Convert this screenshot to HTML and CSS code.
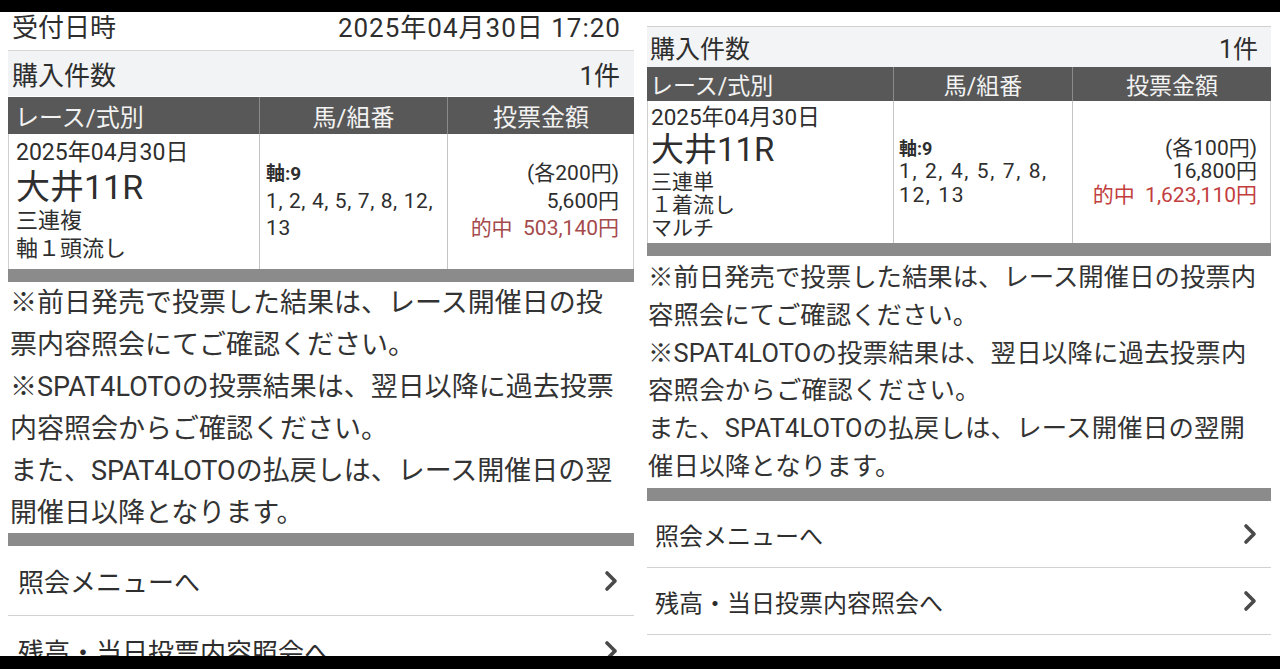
FILE: index.html
```html
<!DOCTYPE html>
<html lang="ja">
<head>
<meta charset="utf-8">
<title>投票内容</title>
<link rel="stylesheet" href="styles.css">
</head>
<body>
<div class="screen">
  <div class="bar-top"></div>
  <div class="panels">
    <section class="panel p-left">
      <div class="row-plain">
        <span>受付日時</span><span class="stamp">2025年04月30日 17:20</span>
      </div>
      <div class="row-count">
        <span>購入件数</span><span>1件</span>
      </div>
      <div class="tbl">
        <div class="th th1">レース/式別</div>
        <div class="th th2">馬/組番</div>
        <div class="th th3">投票金額</div>
        <div class="td td1">
          <div class="date">2025年04月30日</div>
          <div class="race">大井11R</div>
          <div class="kind">三連複</div>
          <div class="kind">軸１頭流し</div>
        </div>
        <div class="td td2">
          <div class="axis">軸:9</div>
          <div class="nums">1, 2, 4, 5, 7, 8, 12,</div>
          <div class="nums">13</div>
        </div>
        <div class="td td3">
          <div class="amt">(各200円)</div>
          <div class="amt">5,600円</div>
          <div class="amt hit">的中&nbsp;&nbsp;503,140円</div>
        </div>
      </div>
      <div class="gbar"></div>
      <div class="notes">
        <p>※前日発売で投票した結果は、レース開催日の投<br>票内容照会にてご確認ください。</p>
        <p>※SPAT4LOTOの投票結果は、翌日以降に過去投票<br>内容照会からご確認ください。</p>
        <p>また、SPAT4LOTOの払戻しは、レース開催日の翌<br>開催日以降となります。</p>
      </div>
      <div class="gbar"></div>
      <div class="menu">
        <div class="mitem"><span>照会メニューへ</span><svg class="chev" viewBox="0 0 14 22"><polyline points="3,3 11,11 3,19" /></svg></div>
        <div class="mitem"><span>残高・当日投票内容照会へ</span><svg class="chev" viewBox="0 0 14 22"><polyline points="3,3 11,11 3,19" /></svg></div>
      </div>
    </section>
    <section class="panel p-right">
      <div class="row-count">
        <span>購入件数</span><span>1件</span>
      </div>
      <div class="tbl">
        <div class="th th1">レース/式別</div>
        <div class="th th2">馬/組番</div>
        <div class="th th3">投票金額</div>
        <div class="td td1">
          <div class="date">2025年04月30日</div>
          <div class="race">大井11R</div>
          <div class="kind">三連単</div>
          <div class="kind">１着流し</div>
          <div class="kind">マルチ</div>
        </div>
        <div class="td td2">
          <div class="axis">軸:9</div>
          <div class="nums">1, 2, 4, 5, 7, 8,</div>
          <div class="nums">12, 13</div>
        </div>
        <div class="td td3">
          <div class="amt">(各100円)</div>
          <div class="amt">16,800円</div>
          <div class="amt hit">的中&nbsp;&nbsp;1,623,110円</div>
        </div>
      </div>
      <div class="gbar"></div>
      <div class="notes">
        <p>※前日発売で投票した結果は、レース開催日の投票内<br>容照会にてご確認ください。</p>
        <p>※SPAT4LOTOの投票結果は、翌日以降に過去投票内<br>容照会からご確認ください。</p>
        <p>また、SPAT4LOTOの払戻しは、レース開催日の翌開<br>催日以降となります。</p>
      </div>
      <div class="gbar"></div>
      <div class="menu">
        <div class="mitem"><span>照会メニューへ</span><svg class="chev" viewBox="0 0 14 22"><polyline points="3,3 11,11 3,19" /></svg></div>
        <div class="mitem"><span>残高・当日投票内容照会へ</span><svg class="chev" viewBox="0 0 14 22"><polyline points="3,3 11,11 3,19" /></svg></div>
      </div>
    </section>
  </div>
  <div class="bar-bottom"></div>
</div>
</body>
</html>
```
FILE: styles.css
```css
* { box-sizing: border-box; margin: 0; padding: 0; }
html, body { width: 1280px; height: 669px; overflow: hidden; background: #000; }
body {
  font-family: Roboto, "Noto Sans CJK JP", sans-serif;
  color: #2e2e2e;
}
.screen { display: flex; flex-direction: column; width: 1280px; height: 669px; }
.bar-top { height: 12px; background: #000; flex: none; }
.bar-bottom { height: 13px; background: #000; flex: none; }
.panels { display: flex; height: 644px; overflow: hidden; background: #fff; }
.panel { width: 640px; height: 644px; overflow: hidden; background: #fff; }
.p-left { padding: 0 6px 0 8px; }
.p-right { padding: 0 9px 0 7px; }

.row-plain, .row-count {
  display: flex; justify-content: space-between; align-items: center;
  white-space: nowrap;
}
.p-left .row-plain {
  height: 39px; font-size: 26px; line-height: 32px; padding: 0 14px 6px 4px;
  border-bottom: 1px solid #d6d6d6;
}
.stamp { letter-spacing: 1px; margin-right: -1px; }
.p-left .row-count {
  height: 45px; font-size: 26px; padding: 0 14px 0 4px; background: #f1f3f5;
}
.p-right .row-count {
  margin-top: 14px; height: 41px; font-size: 25px; padding: 0 13px 0 3px;
  background: #f3f4f6; border-top: 1px solid #cfcfcf;
}

.tbl { display: grid; white-space: nowrap; }
.p-left .tbl { grid-template-columns: 251px 188px 187px; grid-template-rows: 37px 135px; margin-top: 1px; }
.p-right .tbl { grid-template-columns: 246px 179px 199px; grid-template-rows: 34px 142px; }

.th {
  background: #585858; color: #f2f2f2; display: flex; align-items: center;
  border-left: 1px solid #8a8a8a;
}
.th1 { border-left: none; }
.p-left .th { font-size: 24px; }
.p-right .th { font-size: 23px; }
.th2, .th3 { justify-content: center; }
.p-left .th1 { padding-left: 7px; }
.p-right .th1 { padding-left: 3px; }

.td { border-left: 1px solid #c4c4c4; background: #fff; }
.td1 { border-left: 1px solid #d0d0d0; }
.td3 { border-right: 1px solid #d0d0d0; }
.td2, .td3 { display: flex; flex-direction: column; justify-content: center; }
.td3 { align-items: flex-end; }

.p-left .td1 { padding: 5px 0 0 7px; }
.p-left .date { font-size: 23px; line-height: 28px; }
.p-left .race { font-size: 34px; line-height: 40px; }
.p-left .kind { font-size: 22px; line-height: 28px; }
.p-left .td2 { padding-left: 6px; }
.p-left .td2 > div, .p-left .td3 > div { font-size: 21px; line-height: 27.5px; }
.p-left .td3 { padding-right: 14px; }
.p-left .hit { color: #a54a4c; }

.p-right .td1 { padding: 4px 0 0 3px; }
.p-right .date { font-size: 22.5px; line-height: 24px; }
.p-right .race { font-size: 33px; line-height: 42px; }
.p-right .kind { font-size: 21px; line-height: 23px; }
.p-right .td2 { padding-left: 5px; }
.p-right .td2 > div, .p-right .td3 > div { font-size: 21px; line-height: 23.5px; }
.p-right .td3 { padding-right: 13px; }
.p-right .hit { color: #c23e3e; }

.axis { font-weight: 700; }
.p-left .td2 .axis { font-size: 19px; }
.p-right .td2 .axis { font-size: 18px; }
.p-left .td2 .nums { letter-spacing: 0.6px; }
.p-right .td2 .nums { letter-spacing: 1.6px; }

.gbar { height: 13px; background: #8b8b8b; }

.notes { color: #333; white-space: nowrap; }
.p-left .notes { font-size: 27px; line-height: 42px; padding: 0 0 0 2px; height: 251px; }
.p-right .notes { font-size: 25.4px; line-height: 37.8px; padding: 3px 0 0 1px; height: 232px; }
.p-right .notes p:nth-child(n+2) { letter-spacing: 0.2px; }

.mitem {
  display: flex; justify-content: space-between; align-items: center;
  border-bottom: 1px solid #d2d2d2; white-space: nowrap;
}
.p-left .mitem { height: 70px; font-size: 26px; padding: 0 16px 0 10px; }
.p-right .mitem { height: 67px; font-size: 24px; padding: 0 14px 0 8px; }
.chev { width: 14px; height: 22px; flex: none; }
.chev polyline { fill: none; stroke: #4a4a4a; stroke-width: 3.6; stroke-linecap: round; stroke-linejoin: round; }
```
